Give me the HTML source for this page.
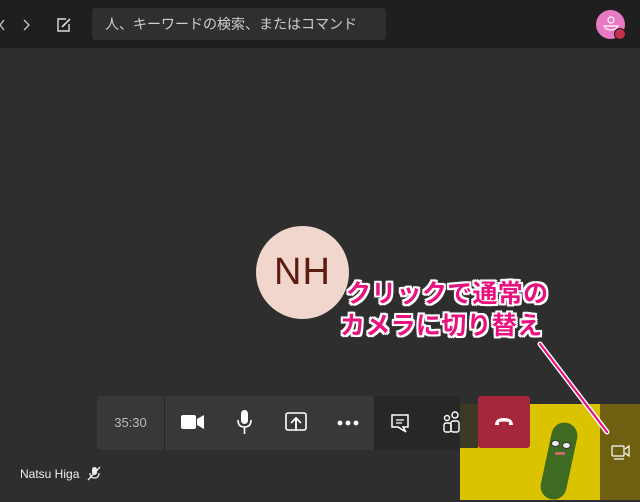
<!DOCTYPE html>
<html><head><meta charset="utf-8"><style>
*{margin:0;padding:0;box-sizing:border-box}
body{width:640px;height:500px;background:#2e2e2e;position:relative;overflow:hidden;font-family:"Liberation Sans","Noto Sans CJK JP",sans-serif}
.top{position:absolute;left:0;top:0;width:640px;height:48px;background:#1f1f1f}
.search{position:absolute;left:92px;top:8px;width:294px;height:32px;background:#2f2f2f;border-radius:4px;color:#cfcfcf;font-size:14px;line-height:32px;padding-left:13px;white-space:nowrap;overflow:hidden}
.abs{position:absolute}
.nh{position:absolute;left:256px;top:226px;width:93px;height:93px;border-radius:50%;background:#f1d6ce;color:#5c1c10;font-size:38px;text-align:center;line-height:93px;letter-spacing:1px}
.call{position:absolute;font-size:25px;font-weight:bold;color:#e8127f;text-shadow:0 0 3px #fff,2px 0 0 #fff,-2px 0 0 #fff,0 2px 0 #fff,0 -2px 0 #fff,2px 2px 0 #fff,-2px -2px 0 #fff,2px -2px 0 #fff,-2px 2px 0 #fff;white-space:nowrap;letter-spacing:0.3px}
</style></head><body>
<div class="top">
 <svg class="abs" style="left:0;top:16px" width="100" height="18" viewBox="0 0 100 18"><path d="M4 4 L0 9 L4 14" stroke="#ccc" stroke-width="1.3" fill="none"/><path d="M24 4 L29 9 L24 14" stroke="#ccc" stroke-width="1.3" fill="none"/><path d="M66 3 H58 V15 H69 V8" stroke="#ddd" stroke-width="1.4" fill="none"/><path d="M62 11 L70 3" stroke="#ddd" stroke-width="1.6"/></svg>
 <div class="search">人、キーワードの検索、またはコマンド</div>
 <div class="abs" style="left:596px;top:10px;width:29px;height:29px;border-radius:50%;background:#e87ac4"></div>
 <svg class="abs" style="left:602px;top:15px" width="18" height="18"><circle cx="9" cy="5" r="3" stroke="#fff" fill="none" stroke-width="1.2"/><path d="M2 11 H16 Q14 15 9 15 Q4 15 2 11Z" stroke="#fff" fill="none" stroke-width="1.2"/></svg>
 <div class="abs" style="left:614px;top:28px;width:12px;height:12px;border-radius:50%;background:#c4314b;border:1px solid #1f1f1f"></div>
</div>
<div class="nh">NH</div>
<div class="call" style="left:346px;top:274px">クリックで通常の</div>
<div class="call" style="left:340px;top:306px">カメラに切り替え</div>
<!-- video -->
<div class="abs" style="left:460px;top:404px;width:180px;height:96px;background:#dcc300"></div>
<div class="abs" style="left:600px;top:404px;width:40px;height:96px;background:#6e6010"></div>
<div class="abs" style="left:460px;top:404px;width:18px;height:44px;background:#3c3a24"></div>
<div class="abs" style="left:546px;top:422px;width:26px;height:78px;border-radius:13px;background:#3f6a22;transform:rotate(12deg)"></div>
<div class="abs" style="left:551px;top:440px;width:9px;height:7px;border-radius:50%;background:#eee;border:1px solid #333"></div>
<div class="abs" style="left:562px;top:442px;width:9px;height:7px;border-radius:50%;background:#eee;border:1px solid #333"></div>
<div class="abs" style="left:555px;top:452px;width:10px;height:3px;border-radius:2px;background:#c76a6a"></div>
<svg class="abs" style="left:611px;top:443px" width="20" height="20"><rect x="1" y="3" width="12" height="10" rx="1" stroke="#fff" fill="none" stroke-width="1.2"/><path d="M14 6 L18 3 V13 L14 10" stroke="#fff" fill="none" stroke-width="1.2"/><path d="M3 16 H13" stroke="#fff" stroke-width="1.2"/></svg>
<!-- toolbar -->
<div class="abs" style="left:97px;top:396px;width:277px;height:54px;background:#383838;border-radius:3px 0 0 3px"></div>
<div class="abs" style="left:164px;top:396px;width:1px;height:54px;background:#262626"></div>
<div class="abs" style="left:374px;top:396px;width:86px;height:54px;background:#272727"></div>
<div class="abs" style="left:97px;top:396px;width:67px;height:54px;color:#bbb;font-size:13px;line-height:54px;text-align:center">35:30</div>
<svg class="abs" style="left:0;top:396px" width="640" height="54">
 <rect x="181" y="19" width="15" height="14" rx="2" fill="#fff"/><path d="M197 23 L204 19 V33 L197 29Z" fill="#fff"/>
 <rect x="241" y="14" width="7" height="14" rx="3.5" fill="#fff"/><path d="M238 24 Q238 31 244.5 31 Q251 31 251 24 M244.5 31 V38" stroke="#fff" fill="none" stroke-width="1.6"/>
 <rect x="286" y="17" width="20" height="17" rx="2" stroke="#fff" fill="none" stroke-width="1.6"/><path d="M296 35 V23 M291 27 L296 22 L301 27" stroke="#fff" fill="none" stroke-width="1.8"/>
 <circle cx="340" cy="27" r="2.4" fill="#fff"/><circle cx="348" cy="27" r="2.4" fill="#fff"/><circle cx="356" cy="27" r="2.4" fill="#fff"/>
 <path d="M392 19 H408 V31 H403 L406 36 L398 31 H392Z" stroke="#fff" fill="none" stroke-width="1.5"/><path d="M396 24 H404 M396 27 H402" stroke="#fff" stroke-width="1.3"/>
 <circle cx="455" cy="19" r="3" stroke="#fff" fill="none" stroke-width="1.4"/><circle cx="447" cy="22" r="2.5" stroke="#fff" fill="none" stroke-width="1.4"/><rect x="444" y="27" width="7" height="9" rx="2" stroke="#fff" fill="none" stroke-width="1.4"/><rect x="451" y="25" width="8" height="11" rx="2" stroke="#fff" fill="none" stroke-width="1.4"/>
</svg>
<div class="abs" style="left:478px;top:396px;width:52px;height:52px;background:#a4273a;border-radius:3px"></div>
<svg class="abs" style="left:478px;top:396px" width="52" height="52"><path d="M17 29 Q17 22 26 22 Q35 22 35 29 L31 29 L31 26 Q26 25 21 26 L21 29Z" fill="#fff"/></svg>
<!-- line -->
<svg class="abs" style="left:0;top:0" width="640" height="500"><line x1="540" y1="344" x2="607" y2="432" stroke="#fff" stroke-width="5" stroke-linecap="round"/><line x1="540" y1="344" x2="607" y2="432" stroke="#e8127f" stroke-width="2.2" stroke-linecap="round"/></svg>
<div class="abs" style="left:20px;top:467px;color:#eee;font-size:12px">Natsu Higa</div>
<svg class="abs" style="left:86px;top:465px" width="16" height="16"><rect x="6" y="2" width="5" height="8" rx="2.5" fill="#eee"/><path d="M4 8 Q4 13 8.5 13 Q13 13 13 8" stroke="#eee" fill="none" stroke-width="1.2"/><path d="M2 15 L14 2" stroke="#eee" stroke-width="1.3"/></svg>
</body></html>
